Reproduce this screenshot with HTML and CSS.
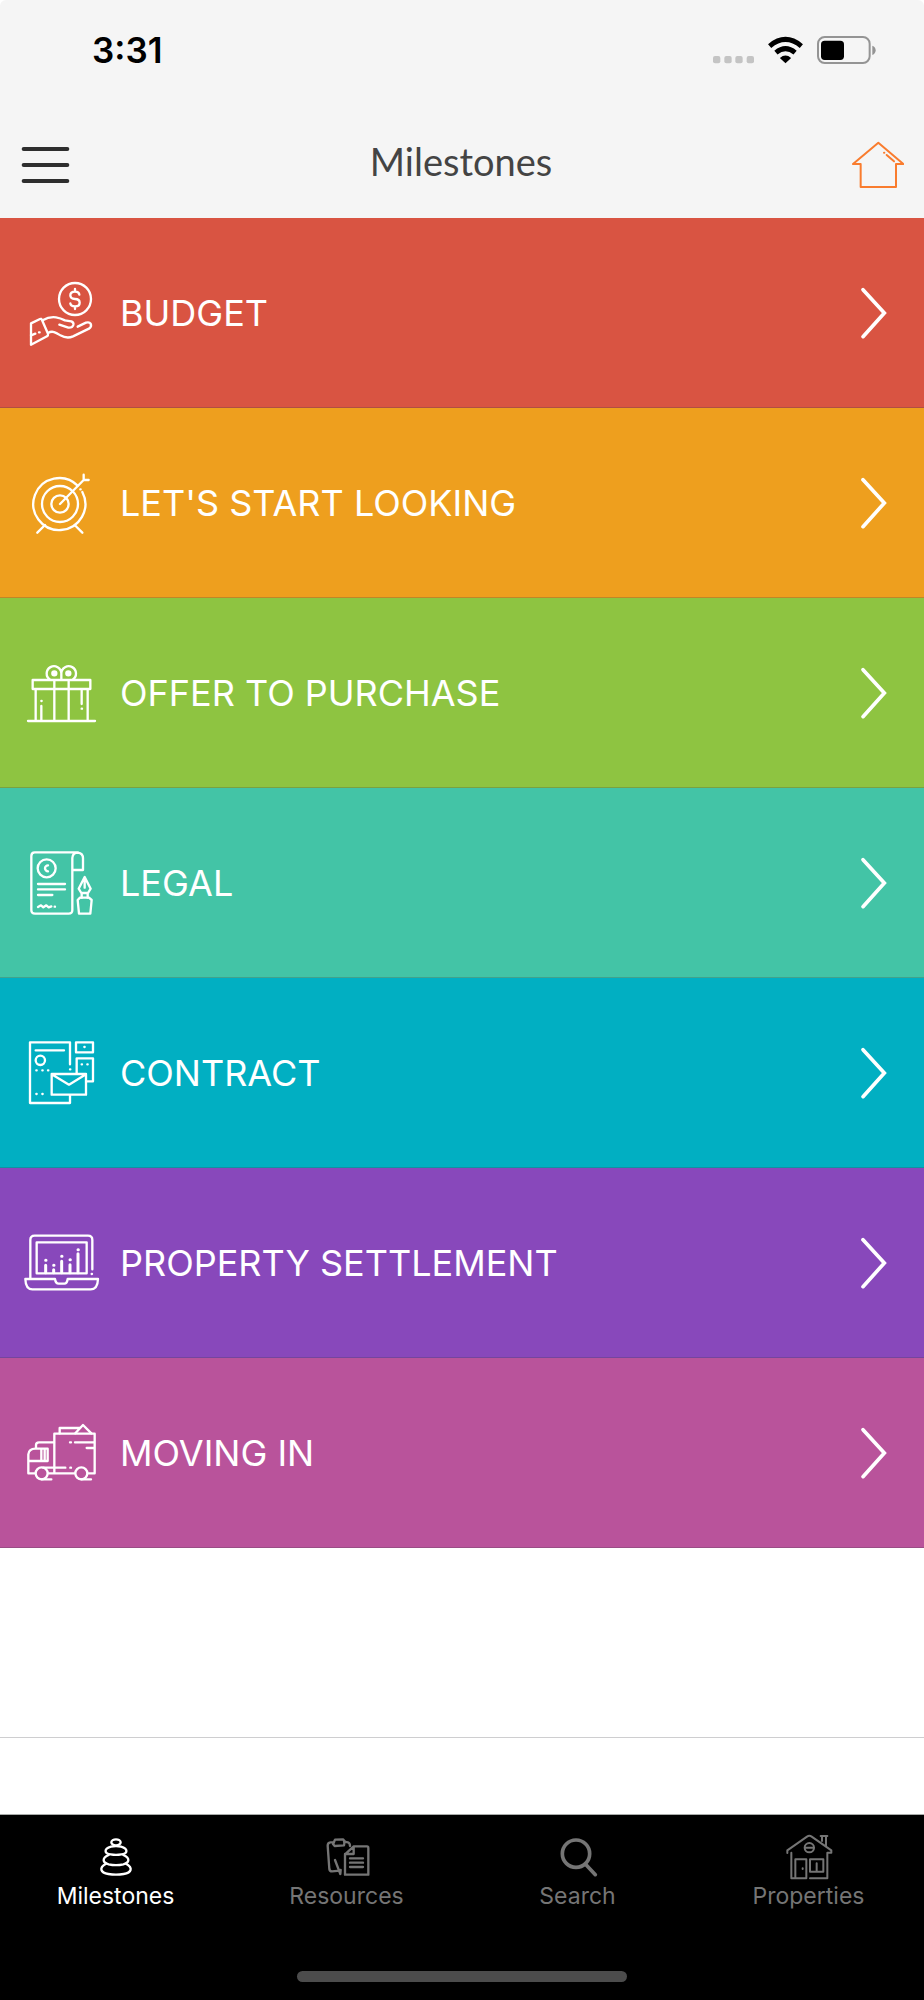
FILE: index.html
```html
<!DOCTYPE html>
<html lang="en">
<head>
  <meta charset="UTF-8">
  <meta name="viewport" content="width=device-width, initial-scale=1.0">
  <title>Milestones</title>
  <link rel="stylesheet" href="styles.css">
</head>
<body>
  <header class="header">
    <div class="status-bar">
      <span class="time">3:31</span>
      <div class="status-icons">
        <svg width="41" height="28" viewBox="752 108 123 84" fill="#c4c4c4">
          <rect x="752" y="168" width="22" height="22" rx="6"/>
          <rect x="786" y="168" width="22" height="22" rx="6"/>
          <rect x="819" y="168" width="22" height="22" rx="6"/>
          <rect x="853" y="168" width="22" height="22" rx="6"/>
        </svg>
        <svg width="35" height="28" viewBox="917 108 106 84">
          <g fill="none" stroke="#000" stroke-width="15">
            <path d="M922 138Q970 98 1018 138"/>
            <path d="M941 158Q970 134 999 158"/>
          </g>
          <path d="M953 174Q970 160 987 174L970 190Z"/>
        </svg>
        <svg width="59" height="28" viewBox="1065 108 177 84">
          <rect x="1068" y="111" width="155" height="78" rx="20" fill="none" stroke="#949494" stroke-width="6"/>
          <rect x="1077" y="122" width="69" height="58" rx="11"/>
          <path d="M1231 137Q1241 141 1241 151Q1241 161 1231 165Z" fill="#949494"/>
        </svg>
      </div>
    </div>
    <nav class="nav-bar">
      <button class="nav-button" aria-label="Menu">
        <svg width="50" height="48" viewBox="60 424 150 144" fill="none" stroke="#2e2e2e" stroke-width="12" stroke-linecap="round">
          <path d="M71 448H202M71 496H202M71 544H202"/>
        </svg>
      </button>
      <h1 class="title">Milestones</h1>
      <button class="nav-button" aria-label="Home">
        <svg width="52" height="48" viewBox="1171 424 156 144" fill="none" stroke="#f97c2e" stroke-width="6" stroke-linecap="round" stroke-linejoin="round">
          <path d="M1250 429L1174 493H1197V562H1303V493H1325Z"/>
          <path d="M1267 459H1268M1275 466L1297 485"/>
        </svg>
      </button>
    </nav>
  </header>

  <main class="milestones">
    <a href="#budget" class="row budget">
      <svg class="row-icon" viewBox="60 36 240 240">
        <circle cx="225" cy="114" r="48"/>
        <path d="M238 101Q237 92 225 92Q211 92 211 103Q211 114 225 114Q239 114 239 125Q239 136 225 136Q212 136 211 127M225 84V92M225 136V144"/>
        <path d="M93 187L120 174Q124 172 126 177L144 218Q145 223 141 226L93 251Z"/>
        <path d="M93 223L106 218M117 214H119"/>
        <path d="M128 178Q148 166 168 169Q181 171 195 178L214 181Q222 184 220 192Q217 201 205 200L178 191"/>
        <path d="M144 216C158 207 170 216 181 223Q201 234 219 226L267 203Q276 197 272 188Q268 182 258 185L233 197"/>
      </svg>
      <span class="row-label">BUDGET</span>
      <svg class="chevron" viewBox="108 78 84 162"><path d="M117 89L181 159L117 230"/></svg>
    </a>
    <a href="#looking" class="row looking">
      <svg class="row-icon" viewBox="60 36 240 240">
        <path d="M233 104A78 78 0 1 0 247 123"/>
        <circle cx="180" cy="159" r="54"/>
        <circle cx="180" cy="159" r="26"/>
        <path d="M180 159L251 87M251 71V87H266M241 115H242M135 222L112 245M224 222L247 245"/>
      </svg>
      <span class="row-label">LET'S START LOOKING</span>
      <svg class="chevron" viewBox="108 78 84 162"><path d="M117 89L181 159L117 230"/></svg>
    </a>
    <a href="#offer" class="row offer">
      <svg class="row-icon" viewBox="60 36 240 240">
        <path d="M98 117H271V144H98ZM107 144V238M263 144V238M163 117V238M206 117V238M84 240H285"/>
        <path d="M150 116A22 22 0 1 1 184 97A22 22 0 1 1 218 116M184 97V116"/>
        <circle cx="163" cy="97" r="6" class="solid"/>
        <circle cx="205" cy="97" r="6" class="solid"/>
        <path d="M124 180H125M124 195V238M245 148V189M245 203H246"/>
      </svg>
      <span class="row-label">OFFER TO PURCHASE</span>
      <svg class="chevron" viewBox="108 78 84 162"><path d="M117 89L181 159L117 230"/></svg>
    </a>
    <a href="#legal" class="row legal">
      <svg class="row-icon" viewBox="60 36 240 240">
        <path d="M234 64H104Q94 64 94 75V237Q94 248 105 248H206Q217 248 217 237V81Q218 65 234 65Q249 67 249 82V117H218"/>
        <circle cx="140" cy="112" r="27"/>
        <path d="M144 103A9 9 0 1 0 144 121"/>
        <path d="M114 159H195M114 175H195M114 192H157M114 228L123 223L130 229L139 223L146 229L154 226M164 227H165"/>
        <path d="M254 138L236 173L244 186H264L272 173ZM254 145V170M245 186V200M263 186V200"/>
        <path d="M240 200H267L275 207L271 248H237L233 207Z"/>
      </svg>
      <span class="row-label">LEGAL</span>
      <svg class="chevron" viewBox="108 78 84 162"><path d="M117 89L181 159L117 230"/></svg>
    </a>
    <a href="#contract" class="row contract">
      <svg class="row-icon" viewBox="60 36 240 240">
        <path d="M210 130V64H90V246H210V223M107 88H192"/>
        <circle cx="121" cy="118" r="14"/>
        <path d="M109 148H110M127 148H128M144 148H145M109 219H110M127 219H128M210 145H211M253 78H254M245 130H246M262 130H263"/>
        <path d="M228 64H279V94H228ZM230 157V112H279V181H261"/>
        <path d="M155 159H258V221H155ZM155 160L207 191L258 160"/>
      </svg>
      <span class="row-label">CONTRACT</span>
      <svg class="chevron" viewBox="108 78 84 162"><path d="M117 89L181 159L117 230"/></svg>
    </a>
    <a href="#settlement" class="row settlement">
      <svg class="row-icon" viewBox="60 36 240 240">
        <path d="M91 202V87Q91 74 104 74H264Q277 74 277 87V175M275 189H276"/>
        <path d="M110 94H260V187H110Z"/>
        <path d="M76 204H165Q167 218 176 218H193Q201 218 203 204H294Q293 235 272 235H97Q77 235 76 204Z"/>
        <path class="bars" d="M137 163V185M161 176V185M185 151V185M210 161V185M234 128V185M137 148H138M161 163H162M185 136H186M210 146H211M234 116H235"/>
      </svg>
      <span class="row-label">PROPERTY SETTLEMENT</span>
      <svg class="chevron" viewBox="108 78 84 162"><path d="M117 89L181 159L117 230"/></svg>
    </a>
    <a href="#moving" class="row moving">
      <svg class="row-icon" viewBox="60 36 240 240">
        <path d="M163 216V98H284V217H265M224 217H145M104 217H85V160Q87 143 106 143H143V180H87M124 144V178M134 144V178"/>
        <path d="M108 141V132Q108 124 117 124H162M179 97V81H239M226 97L249 72L274 97"/>
        <circle cx="125" cy="217" r="18"/>
        <circle cx="244" cy="217" r="18"/>
        <path d="M125 235H154M244 235H273M130 200H196M211 200H213M210 124H213M225 124H282M260 141H282"/>
      </svg>
      <span class="row-label">MOVING IN</span>
      <svg class="chevron" viewBox="108 78 84 162"><path d="M117 89L181 159L117 230"/></svg>
    </a>
    <div class="row"></div>
  </main>

  <footer class="footer">
    <nav class="tab-bar">
      <a href="#milestones" class="tab active">
        <svg class="tab-icon" viewBox="271 96 150 150" stroke-width="7">
          <ellipse cx="346" cy="127" rx="14" ry="9"/>
          <path d="M331 140C309 146 310 160 330 163Q346 166 362 163C382 160 383 146 361 140Q346 137 331 140Z"/>
          <path d="M324 165C303 174 305 188 324 193Q346 198 368 193C387 188 389 174 368 165"/>
          <path d="M316 191C294 203 299 218 323 222Q346 226 369 222C393 218 398 203 376 191"/>
        </svg>
        <span>Milestones</span>
      </a>
      <a href="#resources" class="tab">
        <svg class="tab-icon" viewBox="964 96 150 150" stroke-width="7">
          <path d="M1000 127H989Q981 128 981 137L986 207Q987 214 994 214L1018 212M1030 125L1042 127Q1048 129 1048 138"/>
          <path d="M1003 119L1027 118L1032 124L1030 136L1002 138L997 132Z"/>
          <path d="M1003 180L1019 222M1019 222L1020 210"/>
          <path d="M1059 139H1099Q1103 139 1103 144V224H1033V163ZM1059 139V162H1033M1048 175H1087M1048 188H1087M1048 201H1087"/>
        </svg>
        <span>Resources</span>
      </a>
      <a href="#search" class="tab">
        <svg class="tab-icon" viewBox="271 96 150 150" stroke-width="11">
          <circle cx="340" cy="161" r="41"/>
          <path d="M368 192L398 224"/>
        </svg>
        <span>Search</span>
      </a>
      <a href="#properties" class="tab">
        <svg class="tab-icon" viewBox="964 96 150 150" stroke-width="6">
          <path d="M974 159V151L1033 110Q1040 105 1047 110L1106 151V158H1094V235H1042M986 158V235H1031V178H998V235"/>
          <path d="M1074 108H1094M1078 110V123M1090 110V137M1042 178H1082V215H1042ZM1062 190V215M1020 205V207M1027 143H1053"/>
          <circle cx="1040" cy="143" r="14"/>
        </svg>
        <span>Properties</span>
      </a>
    </nav>
    <div class="home-indicator"></div>
  </footer>
</body>
</html>
```
FILE: styles.css
```css
* { box-sizing: border-box; }
body { display: flex; flex-direction: column; min-height: 100vh; margin: 0; background: #fff; font-family: Inter, "Liberation Sans", sans-serif; }
svg { display: block; flex: none; }
a { text-decoration: none; }

.header { background: #f5f5f5; border-radius: 6px 6px 0 0; }
.status-bar { display: flex; justify-content: space-between; align-items: center; height: 100px; padding: 0 48px 0 92px; }
.time { font-size: 35px; font-weight: 600; color: #000; }
.status-icons { display: flex; align-items: center; gap: 14px; }
.nav-bar { display: flex; justify-content: space-between; align-items: center; height: 118px; padding: 12px 20px 0; }
.nav-button { padding: 0; border: none; background: none; cursor: pointer; }
.title { margin: 0; padding-bottom: 8px; font-family: Lato, sans-serif; font-size: 38px; font-weight: 400; line-height: 48px; color: #444; }

.milestones { flex: 1; }
.row { display: flex; align-items: center; gap: 20px; height: 190px; padding: 0 36px 0 20px; border-bottom: 1px solid rgba(60, 60, 67, 0.25); color: #fff; }
.row-icon { width: 80px; height: 80px; fill: none; stroke: #fff; stroke-width: 7; stroke-linecap: round; stroke-linejoin: round; }
.row-icon .solid { fill: #fff; }
.row-icon .bars { stroke-width: 9; }
.row-label { flex: 1; font-size: 36px; line-height: 48px; }
.chevron { width: 28px; height: 54px; fill: none; stroke: #fff; stroke-width: 11; stroke-linecap: round; }
.budget { background: #d95442; }
.looking { background: #ee9f1e; }
.offer { background: #8ec441; }
.legal { background: #43c4a6; }
.contract { background: #01afc2; }
.settlement { background: #8848bb; }
.moving { background: #b9539b; }

.footer { height: 186px; border-top: 1px solid #a8aba9; background: #000; }
.tab-bar { display: flex; padding-top: 17px; }
.tab { display: flex; flex: 1; flex-direction: column; align-items: center; font-size: 23px; font-weight: 400; line-height: 28px; color: #757575; }
.tab.active { color: #fff; }
.tab-icon { width: 50px; height: 50px; fill: none; stroke: currentColor; stroke-linecap: round; stroke-linejoin: round; }
.home-indicator { width: 330px; height: 11px; margin: 61px auto 0; border-radius: 6px; background: #4c4c4c; }
```
